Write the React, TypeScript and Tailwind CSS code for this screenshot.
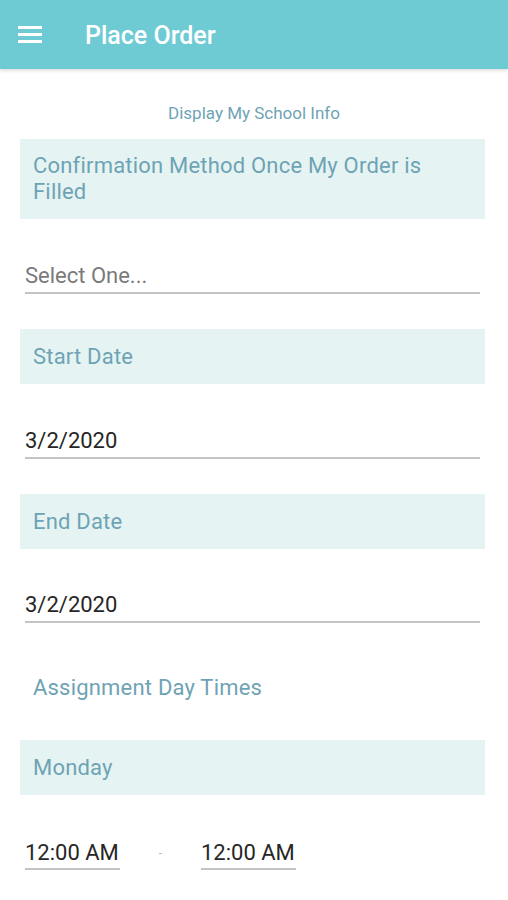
import React from 'react';

const font = { fontFamily: 'Roboto, "Noto Sans", sans-serif' };

const Label = ({ children, tall }: { children: React.ReactNode; tall?: boolean }) => (
  <div
    className={
      tall
        ? 'ml-5 mr-[23px] flex h-[80px] items-center bg-[#e5f4f2] px-[13px] text-[22px] leading-[26px] tracking-[0.2px] text-[#6ea3b5]'
        : 'ml-5 mr-[23px] flex h-[55px] items-center bg-[#e5f4f2] px-[13px] text-[22px] leading-[26px] tracking-[0.2px] text-[#6ea3b5]'
    }
  >
    <div>{children}</div>
  </div>
);

const Field = ({ value, muted }: { value: string; muted?: boolean }) => (
  <div className="ml-[25px] mr-[28px] border-b-2 border-[#c4c4c4] pb-[2px]">
    <span className={muted ? 'text-[22px] leading-[26px] text-[#7a7a7a]' : 'text-[22px] leading-[26px] text-[#262626]'}>
      {value}
    </span>
  </div>
);

export default function App() {
  return (
    <div className="min-h-[900px] w-full bg-white" style={font}>
      <header className="flex h-[69px] items-center bg-[#6fcbd3] shadow-[0_2px_3px_rgba(0,0,0,0.12)]">
        <div className="ml-[18px] flex w-6 flex-col gap-[4px]">
          <span className="h-[3px] w-6 bg-white" />
          <span className="h-[3px] w-6 bg-white" />
          <span className="h-[3px] w-6 bg-white" />
        </div>
        <h1 className="ml-[43px] pt-[2px] text-[25px] font-medium text-white">Place Order</h1>
      </header>

      <div className="mt-[34px] text-center text-[17px] leading-[20px] text-[#6ea3b5]">Display My School Info</div>

      <div className="mt-[16px]">
        <Label tall>
          Confirmation Method Once My Order is
          <br />
          Filled
        </Label>
      </div>

      <div className="mt-[44px]">
        <Field value="Select One..." muted />
      </div>

      <div className="mt-[35px]">
        <Label>Start Date</Label>
      </div>
      <div className="mt-[44px]">
        <Field value="3/2/2020" />
      </div>

      <div className="mt-[35px]">
        <Label>End Date</Label>
      </div>
      <div className="mt-[43px]">
        <Field value="3/2/2020" />
      </div>

      <div className="mt-[52px] px-[33px] text-[22px] leading-[26px] tracking-[0.2px] text-[#6ea3b5]">Assignment Day Times</div>

      <div className="mt-[39px]">
        <Label>Monday</Label>
      </div>

      <div className="ml-[25px] mt-[45px] flex items-end">
        <div className="w-[95px] border-b-2 border-[#c4c4c4] pb-[2px] text-[22px] leading-[26px] text-[#262626]">12:00 AM</div>
        <div className="w-[81px] pb-[10px] text-center text-[12px] leading-[14px] text-[#bbbbbb]">-</div>
        <div className="w-[95px] border-b-2 border-[#c4c4c4] pb-[2px] text-[22px] leading-[26px] text-[#262626]">12:00 AM</div>
      </div>
    </div>
  );
}
